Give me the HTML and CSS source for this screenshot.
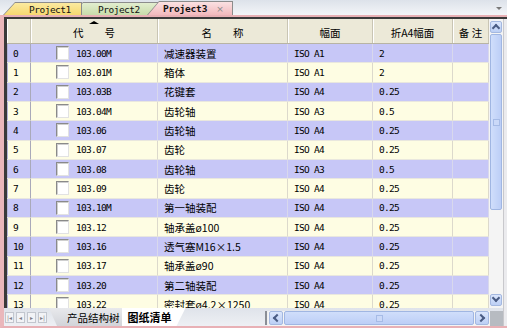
FILE: index.html
```html
<!DOCTYPE html>
<html lang="zh-CN">
<head>
    <meta charset="UTF-8">
    <title>图纸清单</title>
    <link rel="stylesheet" href="styles.css">
</head>
<body>
    <div class="window">
        <div class="tabstrip">
            <div class="tab tab-p1"><div class="tab-face">Project1</div></div>
            <div class="tab tab-p2"><div class="tab-face">Project2</div></div>
            <div class="tab tab-p3"><div class="tab-face">Project3<span class="close">×</span></div></div>
            <div class="strip-fill"></div>
            <div class="tab-menu"></div>
        </div>

        <div class="doc">
            <div class="sheet">
                <div class="grid">
                    <div class="row head">
                        <div class="hcell"></div>
                        <div class="hcell sorted"><span class="sort-arrow"></span>代　　号</div>
                        <div class="hcell">名　　称</div>
                        <div class="hcell">幅面</div>
                        <div class="hcell">折A4幅面</div>
                        <div class="hcell">备 注</div>
                    </div>
                    <div class="rows" id="rows"></div>
                </div>
                <div class="vscroll">
                    <div class="sbtn"><span class="chev up"></span></div>
                    <div class="vthumb"><span class="grip"></span></div>
                    <div class="vtrack"></div>
                    <div class="sbtn"><span class="chev down"></span></div>
                </div>
                <div class="edge"></div>
            </div>

            <div class="footer">
                <div class="nav">
                    <div class="nbtn">|◂</div>
                    <div class="nbtn">◂</div>
                    <div class="nbtn">▸</div>
                    <div class="nbtn">▸|</div>
                </div>
                <div class="sheet-tabs">
                    <div class="stab">产品结构树</div>
                    <div class="stab active">图纸清单</div>
                </div>
                <div class="foot-fill"></div>
                <div class="splitter"></div>
                <div class="hscroll">
                    <div class="sbtn h"><span class="chev left"></span></div>
                    <div class="hthumb"><span class="grip"></span></div>
                    <div class="sbtn h"><span class="chev right"></span></div>
                </div>
                <div class="corner"></div>
                <div class="edge"></div>
            </div>
        </div>
    </div>

    <script>
        const drawings = [
            ['103.00M', '减速器装置', 'ISO A1', '2'],
            ['103.01M', '箱体', 'ISO A1', '2'],
            ['103.03B', '花键套', 'ISO A4', '0.25'],
            ['103.04M', '齿轮轴', 'ISO A3', '0.5'],
            ['103.06', '齿轮轴', 'ISO A4', '0.25'],
            ['103.07', '齿轮', 'ISO A4', '0.25'],
            ['103.08', '齿轮轴', 'ISO A3', '0.5'],
            ['103.09', '齿轮', 'ISO A4', '0.25'],
            ['103.10M', '第一轴装配', 'ISO A4', '0.25'],
            ['103.12', '轴承盖ø100', 'ISO A4', '0.25'],
            ['103.16', '透气塞M16×1.5', 'ISO A4', '0.25'],
            ['103.17', '轴承盖ø90', 'ISO A4', '0.25'],
            ['103.20', '第二轴装配', 'ISO A4', '0.25'],
            ['103.22', '密封套ø4.2×1250', 'ISO A4', '0.25']
        ];

        const rows = document.getElementById('rows');
        drawings.forEach((d, i) => {
            const row = document.createElement('div');
            row.className = 'row ' + (i % 2 === 0 ? 'even' : 'odd');
            row.innerHTML =
                `<div class="cell num mono">${i}</div>` +
                `<div class="cell code mono"><span class="check"></span>${d[0]}</div>` +
                `<div class="cell name">${d[1]}</div>` +
                `<div class="cell mono">${d[2]}</div>` +
                `<div class="cell mono">${d[3]}</div>` +
                `<div class="cell"></div>`;
            rows.appendChild(row);
        });
    </script>
</body>
</html>
```

FILE: styles.css
```css
body {
    margin: 0;
    background: #fff;
    font-family: "Noto Sans CJK SC", sans-serif;
    color: #000;
}
.window {
    width: 507px;
    height: 331px;
    overflow: hidden;
}

/* document tabs */
.tabstrip {
    height: 15px;
    display: flex;
    align-items: flex-end;
    background: linear-gradient(#dde2ea, #f3f5f8);
}
.tab {
    position: relative;
    height: 13px;
    padding: 1px 1px 0 1px;
    box-sizing: border-box;
    background: #8c8c8c;
    clip-path: polygon(12px 0, 100% 0, 100% 100%, 0 100%);
}
.tab-face {
    height: 100%;
    display: flex;
    align-items: center;
    font-family: "DejaVu Sans Mono", monospace;
    font-size: 9.5px;
    letter-spacing: -0.5px;
    color: #111;
    clip-path: polygon(11px 0, 100% 0, 100% 100%, 0 100%);
}
.tab-p1 {
    width: 79px;
    margin-left: 3px;
    z-index: 2;
}
.tab-p1 .tab-face {
    padding-left: 25px;
    background: linear-gradient(#fbeaa0, #f6d870);
}
.tab-p2 {
    width: 89px;
    margin-left: -11px;
    z-index: 1;
}
.tab-p2 .tab-face {
    padding-left: 26px;
    background: linear-gradient(#e2eecf, #c8dcaa);
}
.tab-p3 {
    width: 86px;
    height: 14px;
    margin-left: -13px;
    z-index: 3;
    padding-bottom: 0;
}
.tab-p3 .tab-face {
    padding-left: 15px;
    font-weight: bold;
    letter-spacing: -0.2px;
    background: linear-gradient(#fbe1e2, #f2b9bd);
}
.close {
    margin-left: 9px;
    font-family: "DejaVu Sans", sans-serif;
    font-weight: normal;
    font-size: 9px;
    color: #8a8a8a;
}
.strip-fill {
    flex: 1;
}
.tab-menu {
    width: 0;
    height: 0;
    margin: 0 5px 5px 0;
    border-left: 3px solid transparent;
    border-right: 3px solid transparent;
    border-top: 3px solid #7a7a7a;
}

/* document frame */
.doc {
    border-top: 2px solid #e8b0b5;
    border-left: 4px solid #eab7bb;
    border-bottom: 2px solid #e8b0b5;
}
.sheet {
    display: flex;
    height: 289px;
    border-top: 2px solid #3a3a3a;
}
.grid {
    width: 482px;
    border-left: 3px solid #3a3a3a;
    overflow: hidden;
    background: #fff;
}
.row {
    display: grid;
    grid-template-columns: 24px 127px 130px 85px 80px 36px;
    height: 19.33px;
}
.head {
    height: 25px;
    background: #ece9d8;
    border-bottom: 1px solid #b8b4a4;
    box-sizing: border-box;
}
.hcell {
    display: flex;
    flex-direction: column;
    align-items: center;
    justify-content: flex-end;
    padding-bottom: 4px;
    font-size: 10.5px;
    line-height: 12px;
    border-right: 1px solid #c9c5b4;
    box-shadow: inset 1px 0 0 #fff;
}
.sort-arrow {
    width: 0;
    height: 0;
    margin-bottom: 3px;
    border-left: 5px solid transparent;
    border-right: 5px solid transparent;
    border-bottom: 3px solid #000;
}
.cell {
    display: flex;
    align-items: center;
    padding-left: 6px;
    font-size: 10.5px;
    border-right: 1px solid #dcd9cc;
    border-bottom: 1px solid #e9e7de;
    box-sizing: border-box;
    white-space: nowrap;
    overflow: hidden;
}
.even .cell {
    background: #c7c7f7;
    border-right-color: #d8d8ec;
}
.odd .cell {
    background: #fefde3;
}
.cell.num {
    border-right: 1px solid #a9a9b9;
    box-shadow: inset 1px 0 0 #b4b4d8;
}
.mono {
    font-family: "DejaVu Sans Mono", monospace;
    font-size: 9.5px;
    letter-spacing: -0.7px;
    color: #000;
}
.cell.code {
    padding-left: 25px;
}
.check {
    width: 13px;
    height: 14px;
    margin-right: 7px;
    box-sizing: border-box;
    background: #fff;
    border-top: 1px solid #8a8a8a;
    border-left: 1px solid #8a8a8a;
    border-right: 1px solid #e2e2e2;
    border-bottom: 1px solid #e2e2e2;
    box-shadow: inset 1px 1px 0 #cfcfcf;
}

/* scrollbars */
.vscroll {
    width: 14px;
    display: flex;
    flex-direction: column;
    padding: 2px 1px;
    box-sizing: border-box;
    background: #f4f4f4;
}
.sbtn {
    height: 12px;
    display: flex;
    align-items: center;
    justify-content: center;
    background: linear-gradient(#dbe6fc, #bccff5);
    border: 1px solid #a4b8e0;
    border-radius: 2px;
    box-sizing: border-box;
}
.chev {
    width: 4px;
    height: 4px;
    border-top: 2px solid #4a5c84;
    border-left: 2px solid #4a5c84;
}
.chev.up { transform: translateY(1px) rotate(45deg); }
.chev.down { transform: translateY(-2px) rotate(225deg); }
.chev.left { transform: translateX(1px) rotate(-45deg); }
.chev.right { transform: translateX(-1px) rotate(135deg); }
.vthumb {
    height: 176px;
    margin-top: 1px;
    display: flex;
    align-items: center;
    justify-content: center;
    background: linear-gradient(90deg, #d0defb, #bccef6);
    border: 1px solid #a0b6e2;
    border-radius: 2px;
    box-sizing: border-box;
}
.grip {
    width: 5px;
    height: 5px;
    border: 1px solid #a6bbe6;
    background: #cbd9f8;
}
.vtrack {
    flex: 1;
}
.edge {
    width: 4px;
    background: #ebebee;
    box-shadow: inset 1px 0 0 #c8c8cc;
}

/* bottom bar */
.footer {
    height: 18px;
    display: flex;
    align-items: stretch;
    background: linear-gradient(#dfe3ea, #eef0f4);
}
.nav {
    display: flex;
    gap: 2px;
    align-items: center;
    padding-left: 1px;
}
.nbtn {
    width: 9px;
    height: 11px;
    display: flex;
    align-items: center;
    justify-content: center;
    font-family: "DejaVu Sans", sans-serif;
    font-size: 6px;
    color: #7c7c84;
    background: #f2f3f6;
    border: 1px solid #c2c6ce;
    box-sizing: border-box;
}
.sheet-tabs {
    display: flex;
    margin-left: 2px;
}
.stab {
    display: flex;
    align-items: center;
    padding: 0 10px 0 18px;
    font-size: 10.5px;
    background: linear-gradient(#e8e9ec, #d2d4d9);
    clip-path: polygon(0 0, 100% 0, calc(100% - 6px) 100%, 8px 100%);
}
.stab.active {
    margin-left: -8px;
    padding: 0 14px 0 6px;
    font-size: 11px;
    font-weight: bold;
    background: #fff;
    clip-path: polygon(0 0, 100% 0, calc(100% - 9px) 100%, 0 100%);
}
.foot-fill {
    flex: 1;
}
.splitter {
    width: 3px;
    margin: 3px 0 1px;
    background: #8a8e96;
    box-shadow: inset -1px 0 0 #f0f0f0;
}
.hscroll {
    width: 222px;
    display: flex;
    margin-top: 3px;
    padding: 0 1px;
    box-sizing: border-box;
    background: #f4f4f4;
}
.sbtn.h {
    width: 14px;
    height: 14px;
}
.hthumb {
    flex: 1;
    height: 14px;
    margin: 0 1px;
    box-sizing: border-box;
    display: flex;
    align-items: center;
    justify-content: center;
    background: linear-gradient(#d0defb, #bccef6);
    border: 1px solid #a0b6e2;
    border-radius: 2px;
}
.corner {
    width: 13px;
    margin-top: 3px;
    background: #b7bbc1;
}
```
